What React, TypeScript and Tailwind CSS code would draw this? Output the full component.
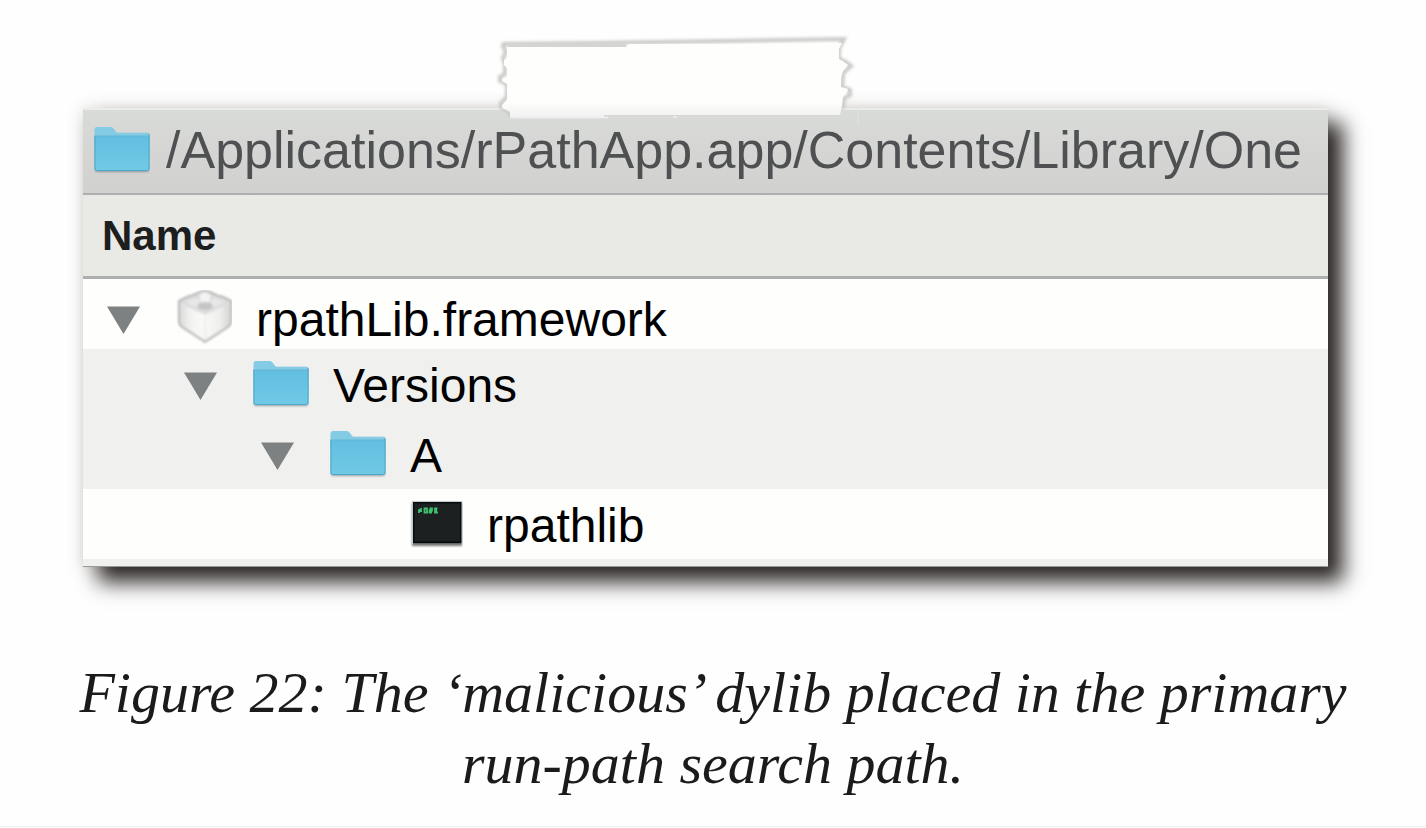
import { useState } from "react";
import type { ReactNode } from "react";

function FolderIcon() {
  return (
    <svg viewBox="0 0 56 48" className="h-12 w-14 shrink-0" aria-hidden="true">
      <defs>
        <linearGradient id="folder" x1="0" y1="0" x2="0" y2="1">
          <stop offset="0" stopColor="#62bfe1" />
          <stop offset="1" stopColor="#70c9e6" />
        </linearGradient>
        <filter id="folderBlur" x="-10%" y="-10%" width="120%" height="130%">
          <feGaussianBlur stdDeviation="1" />
        </filter>
      </defs>
      <rect x="1" y="8" width="54" height="38" rx="2" fill="#6f7d84" opacity="0.7" filter="url(#folderBlur)" />
      <path d="M.5 3.500Q.5 1 3 1h13.500c1.600 0 2.300.7 3.200 1.800l2.100 2.600c.8 1 1.700 1.300 3 1.300H53Q55.500 6.700 55.500 9v8H.5Z" fill="#84cce6" />
      <path d="M.5 10h55v33q0 2-2 2h-51q-2 0-2-2Z" fill="url(#folder)" />
      <path d="M.5 10h55" stroke="#62b6d5" strokeWidth="1" />
      <path d="M1 10v33q0 1.500 1.500 1.500h51q1.500 0 1.500-1.500V8" fill="none" stroke="#50a8c8" strokeWidth="1" />
    </svg>
  );
}

function FrameworkIcon() {
  return (
    <svg viewBox="0 0 56 56" className="size-14 shrink-0" aria-hidden="true">
      <defs>
        <linearGradient id="brickLeft" x1="0" y1="0" x2="1" y2="0">
          <stop offset="0" stopColor="#dededd" />
          <stop offset="0.400" stopColor="#f2f2f1" />
          <stop offset="1" stopColor="#fbfbfa" />
        </linearGradient>
        <linearGradient id="brickRight" x1="1" y1="0" x2="0" y2="0">
          <stop offset="0" stopColor="#d8d8d7" />
          <stop offset="0.400" stopColor="#efefee" />
          <stop offset="1" stopColor="#f8f8f7" />
        </linearGradient>
        <filter id="brickSoft" x="-5%" y="-5%" width="110%" height="110%">
          <feGaussianBlur stdDeviation="0.800" />
        </filter>
      </defs>
      <g filter="url(#brickSoft)">
        <path d="M3 11 12 6.500l4-1 7-3q6-3 12 0l6 3 5 1L55 11v20q0 4-3 6L29 52 6 37q-3-2-3-6Z" fill="#dedfde" stroke="#b6b7b7" strokeWidth="2" strokeLinejoin="round" />
        <path d="M5 14 29 25v25L8 36.500q-3-2-3-5Z" fill="url(#brickLeft)" />
        <path d="M53 14 29 25v25l21-13.500q3-2 3-5Z" fill="url(#brickRight)" />
        <path d="m7 12 10-5 6-3 6-1 6 1 6 3 10 5-22 11Z" fill="#dbdcdb" />
        <path d="m10 12 9-4 4 2v4l-4 3Zm38 0-9-4-4 2v4l4 3Z" fill="#e6e7e6" />
        <path d="M24 4q5-3 10 0v7q-5 2-10 0Z" fill="#f3f3f2" />
        <path d="M22 14q7-3 14 0v4q-7 4-14 0Z" fill="#c4c5c5" />
        <path d="M29 26v23" stroke="#e2e2e0" />
      </g>
    </svg>
  );
}

function ExecutableIcon() {
  return (
    <svg viewBox="0 0 56 48" className="h-12 w-14 shrink-0" aria-hidden="true">
      <defs>
        <filter id="execBlur" x="-10%" y="-10%" width="120%" height="120%">
          <feGaussianBlur stdDeviation="1.200" />
        </filter>
        <filter id="glyphBlur" x="-20%" y="-20%" width="140%" height="140%">
          <feGaussianBlur stdDeviation="0.500" />
        </filter>
      </defs>
      <rect x="5" y="2.500" width="50" height="43.500" fill="#555" opacity="0.8" filter="url(#execBlur)" />
      <rect x="5" y="1" width="50" height="43" fill="#bfcaca" />
      <rect x="6" y="2" width="48.500" height="41.500" fill="#090b0b" />
      <rect x="7.500" y="3.500" width="45.500" height="38" fill="#1d2020" />
      <path
        d="M12 13V10l3-1.500M12 11h3M17.500 8.500v4h2.500v-4ZM22.500 8.500h2.500v2h-2.500v2H25M30.500 8.500H28v4h3M28 10.500h2"
        fill="none"
        stroke="#3fc06f"
        strokeWidth="1.800"
        filter="url(#glyphBlur)"
      />
    </svg>
  );
}

function Tape() {
  return (
    <svg viewBox="0 0 366 90" className="absolute -top-[73px] left-[413px] h-[90px] w-[366px]" aria-hidden="true">
      <defs>
        <filter id="tapeBlur" x="-5%" y="-10%" width="110%" height="120%">
          <feGaussianBlur stdDeviation="1.400" />
        </filter>
        <linearGradient id="tapeFill" x1="0" y1="0" x2="0" y2="1">
          <stop offset="0.800" stopColor="#fefefd" />
          <stop offset="1" stopColor="#f0f1f0" />
        </linearGradient>
      </defs>
      <path
        d="M6 9 100 8 230 6 348 4 343 13V24L350 27 355 31 347 38 346 52 354 55 354 60 348 63 347 74M14 82V77L5 72V68L11 62V49L4 46V42L9 39V29L7 23 10 17 6 9"
        fill="none"
        stroke="#c9cac8"
        strokeWidth="4"
        filter="url(#tapeBlur)"
      />
      <path
        d="M11 12H132V9L232 9 346 8 343 14V24L348 27 352 30 347 36 345 43V52L352 54 351 57 347 62 346 70 344 80H108V82H14V77L6 73V70L11 65V49L6 46V44L11 42V33L8 30V25L11 23Z"
        fill="url(#tapeFill)"
      />
      <path d="M12 10.500h118" stroke="#d4d5d3" strokeWidth="3" />
      <path d="M14 82.500h98M177 82h4" stroke="#eeefee" strokeWidth="1.500" />
      <path d="M362 72v18" stroke="#e2e3e1" />
    </svg>
  );
}

type Item = { name: string; level: number; icon: ReactNode; expandable: boolean; row: string };

const items: Item[] = [
  { name: "rpathLib.framework", level: 0, icon: <FrameworkIcon />, expandable: true, row: "pl-6 pt-2" },
  { name: "Versions", level: 1, icon: <FolderIcon />, expandable: true, row: "pl-[101px] bg-[#f0f0ef]" },
  { name: "A", level: 2, icon: <FolderIcon />, expandable: true, row: "pl-[178px] bg-[#f0f0ef]" },
  { name: "rpathlib", level: 3, icon: <ExecutableIcon />, expandable: false, row: "pl-[255px]" },
];

export default function App() {
  const [closedLevel, setClosedLevel] = useState(Infinity);
  const visible = items.filter((item) => item.level <= closedLevel);

  return (
    <main className="min-h-screen overflow-x-hidden bg-[#fefefe]">
      <figure className="border-b border-[#eeeeee] pb-[27px] pt-[108px]">
        <div className="relative ml-[83px] mr-[98px] bg-[#fefefd] font-['Liberation_Sans',Arial,sans-serif] shadow-[15px_15px_20px_0px_#2b2625,0_0_16px_0px_rgba(60,45,30,0.15)]">
          <header className="flex h-[87px] items-center gap-4 whitespace-nowrap border-b-2 border-t-2 border-b-[#adaeae] border-t-[#ebeceb] bg-linear-to-b from-[#d9dbd9] to-[#d1d1cf] pb-1 pl-[11px] text-[52px] leading-none text-[#4e5051]">
            <FolderIcon />
            <h1>/Applications/rPathApp.app/Contents/Library/One</h1>
          </header>
          <Tape />
          <table className="w-full border-collapse">
            <thead>
              <tr>
                <th scope="col" className="p-0 text-left">
                  <div className="flex h-[84px] items-center border-b-3 border-[#adb0b0] bg-[#e9eae6] pl-[19px] text-[42px] font-bold leading-none text-[#1c1e1f]">
                    Name
                  </div>
                </th>
              </tr>
            </thead>
            <tbody>
              {visible.map((item) => (
                <tr key={item.name}>
                  <td className="p-0">
                    <div className={`flex h-[70px] items-center text-[48px] leading-none text-black ${item.row}`}>
                      {item.expandable ? (
                        <button
                          type="button"
                          aria-label={`Toggle ${item.name}`}
                          aria-expanded={closedLevel > item.level}
                          onClick={() => setClosedLevel(closedLevel > item.level ? item.level : Infinity)}
                          className="mr-9 mt-1 w-[33px] shrink-0"
                        >
                          <svg viewBox="0 0 33 28" className="h-7 w-full" aria-hidden="true">
                            <path d="M0 .5h33L16.500 28Z" fill="#7d8182" />
                          </svg>
                        </button>
                      ) : (
                        <span className="mr-9 w-[33px] shrink-0" />
                      )}
                      {item.icon}
                      <span className="ml-6 mt-1">{item.name}</span>
                    </div>
                  </td>
                </tr>
              ))}
            </tbody>
          </table>
          <div className="h-2 border-b border-[#999897] bg-[#f0f0ef]" />
        </div>
        <figcaption className="mt-[90px] px-[60px] text-center font-['Liberation_Serif','Times_New_Roman',serif] text-[58px] italic leading-[71px] text-[#1c1a1b]">
          Figure 22: The ‘malicious’ dylib placed in the primary run-path search path.
        </figcaption>
      </figure>
    </main>
  );
}
